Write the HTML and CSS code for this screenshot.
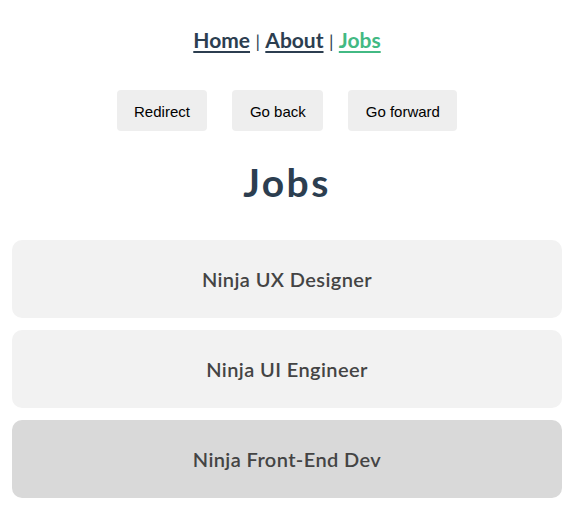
FILE: index.html
```html
<!DOCTYPE html>
<html lang="en">
<head>
<meta charset="utf-8">
<title>Jobs</title>
<link rel="stylesheet" href="styles.css">
</head>
<body>
<div class="app">
  <nav class="nav">
    <a href="#" class="nav-link">Home</a> <span class="sep">|</span> <a href="#" class="nav-link">About</a> <span class="sep">|</span> <a href="#" class="nav-link active">Jobs</a>
  </nav>
  <div class="controls">
    <button class="btn">Redirect</button>
    <button class="btn">Go back</button>
    <button class="btn">Go forward</button>
  </div>
  <h1 class="title">Jobs</h1>
  <div class="jobs">
    <div class="job"><h2 class="job-title">Ninja UX Designer</h2></div>
    <div class="job"><h2 class="job-title">Ninja UI Engineer</h2></div>
    <div class="job hover"><h2 class="job-title">Ninja Front-End Dev</h2></div>
  </div>
</div>
</body>
</html>
```
FILE: styles.css
```css
html, body {
  margin: 0;
  padding: 0;
  background: #ffffff;
}
.app {
  padding: 0 14px 0 12px;
  font-family: Lato, "Liberation Sans", sans-serif;
  color: #2c3e50;
  text-align: center;
}
.nav {
  height: 52px;
  padding-top: 28px;
  box-sizing: border-box;
  font-size: 21px;
  line-height: 24px;
  color: #2c3e50;
}
.sep {
  font-size: 18px;
  line-height: 1;
  font-weight: normal;
}
.nav-link {
  font-weight: bold;
  color: #2c3e50;
  text-decoration: underline;
  text-underline-offset: 3px;
}
.nav-link.active {
  color: #42b983;
}
.controls {
  display: flex;
  justify-content: center;
  gap: 25px;
  margin-top: 38px;
}
.btn {
  font-family: "Liberation Sans", Arial, sans-serif;
  font-size: 15px;
  height: 41px;
  padding: 1px 17.5px 0;
  border: none;
  border-radius: 4px;
  background: #eeeeee;
  color: #000;
}
.title {
  margin: 28px 0 0;
  font-size: 39px;
  line-height: 46px;
  font-weight: bold;
  letter-spacing: 2.4px;
  color: #2c3e50;
}
.jobs {
  display: flex;
  flex-direction: column;
  gap: 12px;
  margin-top: 35px;
}
.job {
  background: #f2f2f2;
  border-radius: 10px;
  padding: 27px 20px;
  color: #444444;
}
.job.hover {
  background: #d9d9d9;
}
.job-title {
  margin: 0;
  font-size: 20px;
  line-height: 24px;
  font-weight: 600;
  letter-spacing: 0.4px;
}
```
